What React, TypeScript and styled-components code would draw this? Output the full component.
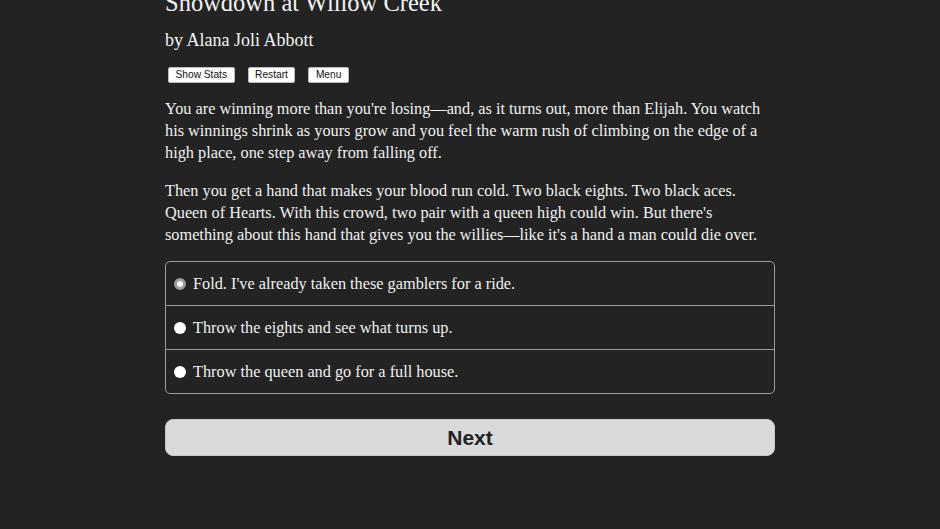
import styled, { createGlobalStyle } from 'styled-components';

const GlobalStyle = createGlobalStyle`
	html, body {
		margin: 0;
		padding: 0;
		background: #232323;
	}
	body {
		font-family: 'Liberation Serif', serif;
		color: #f2f2f2;
	}
`;

const Page = styled.main`
	width: 610px;
	margin: -12px auto 0;
	padding-bottom: 40px;
`;

const Title = styled.h1`
	font-size: 24.5px;
	font-weight: normal;
	line-height: 30px;
	margin: 0;
	color: #f4f4f4;
`;

const Author = styled.h2`
	font-size: 18px;
	font-weight: normal;
	line-height: 24px;
	margin: 10px 0 0;
	color: #f4f4f4;
`;

const Toolbar = styled.div`
	display: flex;
	gap: 13px;
	margin: 15px 0 0 3px;
`;

const SmallButton = styled.button`
	font-family: 'Liberation Sans', Arial, sans-serif;
	font-size: 10.2px;
	line-height: 12px;
	padding: 1px 6.5px;
	background: #fff;
	color: #111;
	border: 1px solid #bbb;
	border-radius: 2px;
`;

const Story = styled.div`
	display: flex;
	flex-direction: column;
	gap: 16px;
	margin-top: 15px;
`;

const Paragraph = styled.p`
	font-size: 16.3px;
	line-height: 22px;
	margin: 0;
	color: #f0f0f0;
`;

const Choices = styled.fieldset`
	margin: 15px 0 0;
	padding: 0;
	border: 1px solid #9a9a9a;
	border-radius: 5px;
`;

const Choice = styled.label<{ $first?: boolean }>`
	display: flex;
	align-items: center;
	gap: 7px;
	height: 43px;
	padding: 0 8px;
	border-top: ${(p) => (p.$first ? 'none' : '1px solid #9a9a9a')};
	font-size: 16.3px;
	color: #f0f0f0;
`;

const Radio = styled.span<{ $checked?: boolean }>`
	width: 12px;
	height: 12px;
	border-radius: 50%;
	box-sizing: border-box;
	background: #fff;
	border: ${(p) => (p.$checked ? '3px solid #9c9c9c' : 'none')};
	flex: none;
`;

const NextButton = styled.button`
	display: block;
	width: 100%;
	height: 37px;
	margin-top: 25px;
	background: #dadada;
	border: 1px solid #c8c8c8;
	border-radius: 8px;
	font-family: 'Liberation Sans', Arial, sans-serif;
	font-weight: bold;
	font-size: 21px;
	color: #222;
`;

const options = [
	"Fold. I've already taken these gamblers for a ride.",
	'Throw the eights and see what turns up.',
	'Throw the queen and go for a full house.',
];

const App = () => {
	return (
		<>
			<GlobalStyle />
			<Page>
				<Title>Showdown at Willow Creek</Title>
				<Author>by Alana Joli Abbott</Author>
				<Toolbar>
					<SmallButton>Show Stats</SmallButton>
					<SmallButton>Restart</SmallButton>
					<SmallButton>Menu</SmallButton>
				</Toolbar>
				<Story>
					<Paragraph>
						You are winning more than you're losing—and, as it turns out, more than Elijah. You watch his
						winnings shrink as yours grow and you feel the warm rush of climbing on the edge of a high
						place, one step away from falling off.
					</Paragraph>
					<Paragraph>
						Then you get a hand that makes your blood run cold. Two black eights. Two black aces. Queen of
						Hearts. With this crowd, two pair with a queen high could win. But there's something about
						this hand that gives you the willies—like it's a hand a man could die over.
					</Paragraph>
				</Story>
				<Choices>
					{options.map((o, i) => (
						<Choice key={o} $first={i === 0}>
							<Radio $checked={i === 0} />
							{o}
						</Choice>
					))}
				</Choices>
				<NextButton>Next</NextButton>
			</Page>
		</>
	);
};

export default App;
